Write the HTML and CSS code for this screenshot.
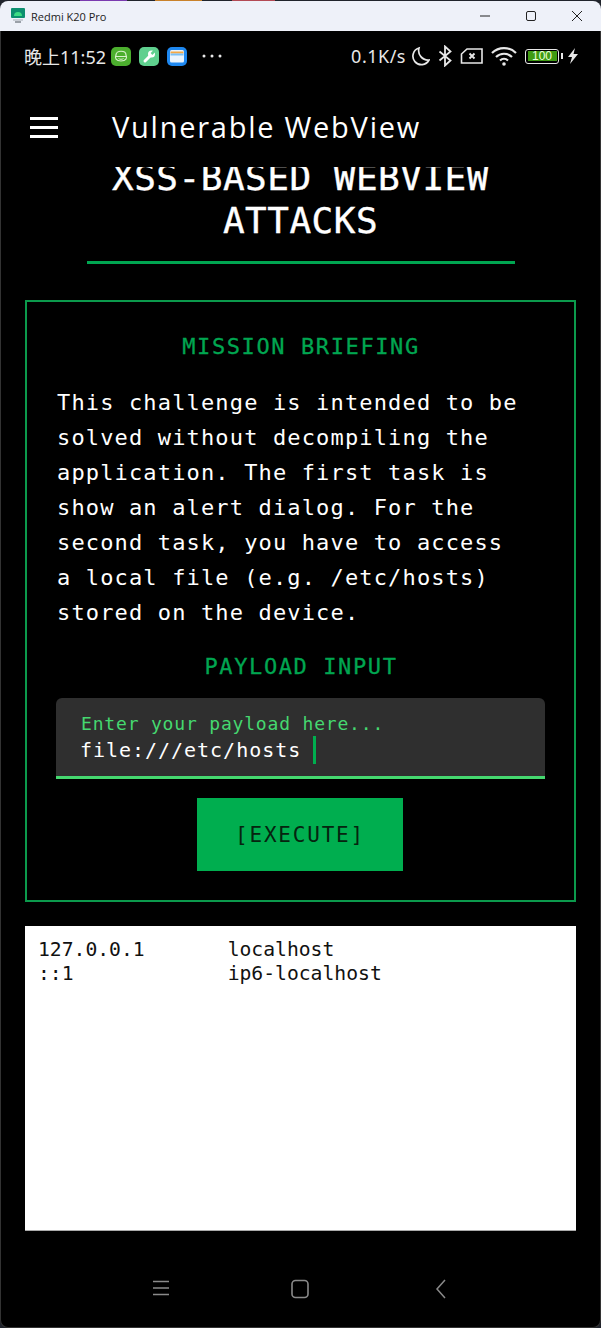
FILE: index.html
```html
<!DOCTYPE html>
<html lang="en">
<head>
    <meta charset="UTF-8">
    <meta name="viewport" content="width=device-width, initial-scale=1.0">
    <title>Vulnerable WebView</title>
    <link rel="stylesheet" href="styles.css">
</head>
<body>

<div class="window">
    <div class="title-bar">
        <svg class="emu-icon" width="16" height="16" viewBox="0 0 16 16">
            <rect x="1" y="0" width="14" height="10" rx="1" fill="#0d8f6f"/>
            <path d="M4 8a4 4 0 0 1 8 0z" fill="#3ddc84"/>
            <rect x="3" y="11" width="10" height="2" fill="#c9ced6"/>
            <rect x="5" y="13" width="6" height="2" fill="#9aa0a8"/>
        </svg>
        <span class="device-name">Redmi K20 Pro</span>
        <div class="window-controls">
            <svg width="14" height="14" viewBox="0 0 14 14"><path d="M2 7h10" stroke="#222" stroke-width="1" fill="none"/></svg>
            <svg width="14" height="14" viewBox="0 0 14 14"><rect x="2.5" y="2.5" width="9" height="9" rx="1.5" stroke="#222" stroke-width="1" fill="none"/></svg>
            <svg width="14" height="14" viewBox="0 0 14 14"><path d="M2 2l10 10M12 2L2 12" stroke="#222" stroke-width="1" fill="none"/></svg>
        </div>
    </div>

    <div class="phone">
        <div class="status-bar">
            <span class="clock">晚上11:52</span>
            <div class="notif-icons">
                <svg width="20" height="19" viewBox="0 0 20 19"><rect width="20" height="19" rx="5" fill="#4caf2e"/><path d="M5 8c0-5 10-5 10 0 1.500 3 0 6-5 6s-6.500-3-5-6z" fill="none" stroke="#d9f2cf" stroke-width="1.200"/><path d="M5 9.500h10M7.500 11.500c1.500 1 3.500 1 5 0" stroke="#d9f2cf" stroke-width="1" fill="none"/></svg>
                <svg width="20" height="19" viewBox="0 0 20 19"><rect width="20" height="19" rx="5" fill="#5fd08e"/><path d="M6 14l6-6" stroke="#fff" stroke-width="3" stroke-linecap="round"/><circle cx="12.500" cy="7" r="3.500" fill="#fff"/><path d="M12.500 7l4-4" stroke="#5fd08e" stroke-width="2.500"/></svg>
                <svg width="20" height="19" viewBox="0 0 20 19"><rect width="20" height="19" rx="5" fill="#1e88f0"/><rect x="3" y="3" width="14" height="12.500" rx="1.500" fill="#eaf4fd"/><rect x="3.500" y="4.500" width="13" height="2" fill="#f5a742"/><rect x="3.500" y="6.500" width="13" height="2" fill="#7cc0f5"/></svg>
            </div>
            <svg class="more-dots" width="20" height="4" viewBox="0 0 20 4"><circle cx="2" cy="2" r="1.500" fill="#e8e8e8"/><circle cx="10" cy="2" r="1.500" fill="#e8e8e8"/><circle cx="18" cy="2" r="1.500" fill="#e8e8e8"/></svg>
            <div class="status-right">
                <span class="net-speed">0.1K/s</span>
                <svg width="19" height="20" viewBox="0 0 19 20"><path d="M8 2a8.500 8.500 0 1 0 10 12A9.500 9.500 0 0 1 8 2z" fill="none" stroke="#e8e8e8" stroke-width="1.700"/></svg>
                <svg width="14" height="22" viewBox="0 0 14 22"><path d="M1.500 6.500l11 9L7 20.500V1.500l5.500 5-11 9" fill="none" stroke="#e8e8e8" stroke-width="1.800"/></svg>
                <svg width="23" height="18" viewBox="0 0 23 18"><path d="M7 2h15v14H1.500V7z" fill="none" stroke="#e8e8e8" stroke-width="1.600"/><path d="M9.500 6.500l5 5M14.500 6.500l-5 5" stroke="#e8e8e8" stroke-width="1.900"/></svg>
                <svg width="26" height="20" viewBox="0 0 26 20"><path d="M1 7a17 17 0 0 1 24 0M5 11a11.500 11.500 0 0 1 16 0M9 14.500a6 6 0 0 1 8 0" fill="none" stroke="#e8e8e8" stroke-width="2.200"/><circle cx="13" cy="18" r="1.800" fill="#e8e8e8"/></svg>
                <div class="battery"><span class="battery-level">100</span></div>
                <svg class="charge-bolt" width="10" height="16" viewBox="0 0 10 16"><path d="M7 0L0 9h4l-2 7 8-10H5.500z" fill="#e8e8e8"/></svg>
            </div>
        </div>

        <div class="app-bar">
            <div class="hamburger"><span></span><span></span><span></span></div>
            <span class="app-title">Vulnerable WebView</span>
        </div>

        <div class="scroll-area">
            <h1 class="page-title">XSS-BASED WEBVIEW ATTACKS</h1>
            <div class="title-rule"></div>

            <div class="mission-card">
                <h2 class="section-label">MISSION BRIEFING</h2>
                <p class="briefing">This challenge is intended to be solved without decompiling the application. The first task is show an alert dialog. For the second task, you have to access a local file (e.g. /etc/hosts) stored on the device.</p>
                <h2 class="section-label payload-label">PAYLOAD INPUT</h2>
                <div class="payload-field">
                    <div class="field-hint">Enter your payload here...</div>
                    <div class="field-value">file:///etc/hosts<span class="caret"></span></div>
                </div>
                <button class="execute-button">[EXECUTE]</button>
            </div>

            <pre class="result-view">127.0.0.1       localhost
::1             ip6-localhost</pre>
        </div>

        <div class="nav-bar">
            <svg width="18" height="18" viewBox="0 0 18 18"><path d="M1 2.500h16M1 9h16M1 15.500h16" stroke="#8a8a8a" stroke-width="1.500" fill="none"/></svg>
            <svg width="18" height="20" viewBox="0 0 18 20"><rect x="1" y="1.500" width="16" height="17" rx="3.500" stroke="#8a8a8a" stroke-width="1.600" fill="none"/></svg>
            <svg class="nav-back" width="12" height="20" viewBox="0 0 12 20"><path d="M10 1L2 10l8 9" stroke="#8a8a8a" stroke-width="1.500" fill="none"/></svg>
        </div>
    </div>
</div>

</body>
</html>
```

FILE: styles.css
```css
* {
    box-sizing: border-box;
}

body {
    margin: 0;
    height: 1328px;
    overflow: hidden;
    font-family: "DejaVu Sans Mono", monospace;
    background: linear-gradient(90deg, #20242c 0 80px, #7a3bb0 80px 127px, #20242c 127px 155px, #c9822b 155px 202px, #20242c 202px 232px, #b34a55 232px 275px, #20242c 275px);
}

.window {
    height: 1328px;
    padding-top: 1px;
    display: flex;
    flex-direction: column;
}

.title-bar {
    height: 30px;
    display: flex;
    align-items: center;
    padding-left: 10px;
    background-color: #eef1f9;
    border-radius: 8px 8px 0 0;
    flex-shrink: 0;
}

.device-name {
    margin-left: 5px;
    font-family: "Open Sans", sans-serif;
    font-size: 11px;
    color: #1c1c1c;
}

.window-controls {
    margin-left: auto;
    display: flex;
    gap: 32px;
    padding-right: 17px;
}

.phone {
    flex: 1;
    display: flex;
    flex-direction: column;
    background-color: #000;
    border-left: 1px solid #333;
    border-right: 1px solid #333;
    border-bottom: 1px solid #333;
    border-radius: 0 0 8px 8px;
    min-height: 0;
}

.status-bar {
    height: 50px;
    display: flex;
    align-items: center;
    padding: 0 22px 0 23px;
    color: #e8e8e8;
    flex-shrink: 0;
}

.clock {
    font-family: "Noto Sans", "Noto Sans CJK SC", sans-serif;
    font-size: 18px;
}

.notif-icons {
    display: flex;
    gap: 8px;
    margin-left: 5px;
}

.more-dots {
    margin-left: 15px;
}

.status-right {
    margin-left: auto;
    display: flex;
    align-items: center;
    gap: 8px;
}

.net-speed {
    margin-right: -3px;
    font-family: "Noto Sans", sans-serif;
    font-size: 18px;
    letter-spacing: 0.5px;
}

.battery {
    position: relative;
    width: 34px;
    height: 15px;
    margin-right: 3px;
    border: 1.5px solid #e8e8e8;
    border-radius: 3px;
    padding: 1.5px;
    display: flex;
}

/* battery nub */
.battery::after {
    content: "";
    position: absolute;
    right: -5px;
    top: 3px;
    width: 2px;
    height: 6px;
    background-color: #e8e8e8;
}

.battery-level {
    flex: 1;
    background-color: #3f9b12;
    font-family: "Liberation Sans", sans-serif;
    font-size: 12px;
    line-height: 10px;
    text-align: center;
    color: #eaffd8;
}

.charge-bolt {
    margin-left: -2px;
}

.app-bar {
    height: 86px;
    display: flex;
    align-items: center;
    flex-shrink: 0;
    padding: 6px 0 0 29px;
}

.hamburger {
    width: 28px;
    display: flex;
    flex-direction: column;
    gap: 6px;
}

.hamburger span {
    height: 3px;
    background-color: #fff;
}

.app-title {
    margin: -2px 0 0 54px;
    font-family: "Open Sans", sans-serif;
    font-size: 29px;
    letter-spacing: 1.75px;
    color: #fff;
}

.scroll-area {
    flex: 1;
    overflow: hidden;
    min-height: 0;
    padding: 0 24px;
}

.page-title {
    margin: -11px 0 0;
    padding: 0 60px;
    font-size: 36px;
    font-weight: 400;
    line-height: 43px;
    letter-spacing: 0.5px;
    text-align: center;
    color: #fff;
    -webkit-text-stroke: 0.4px #fff;
}

.title-rule {
    width: 428px;
    height: 3px;
    margin: 19px auto 36px;
    background-color: #00a651;
}

.mission-card {
    height: 602px;
    padding: 30px 29px 0;
    border: 2px solid #0b9a4c;
    display: flex;
    flex-direction: column;
    align-items: center;
}

.section-label {
    margin: 0;
    padding-left: 1px;
    font-size: 22px;
    font-weight: 400;
    line-height: 30px;
    letter-spacing: 1.6px;
    text-align: center;
    color: #00a651;
    -webkit-text-stroke: 0.3px #00a651;
}

.briefing {
    margin: 23px 0 0;
    width: 100%;
    padding: 0 16px 0 1px;
    font-size: 22px;
    line-height: 35px;
    letter-spacing: 1.15px;
    color: #fff;
}

.payload-label {
    margin-top: 22px;
}

.payload-field {
    width: 100%;
    height: 81px;
    margin-top: 16px;
    padding: 14px 24px 0;
    background-color: #2f2f2f;
    border-bottom: 3px solid #45d86f;
    border-radius: 6px 6px 0 0;
}

.field-hint {
    margin-left: 1px;
    font-size: 18px;
    line-height: 24px;
    letter-spacing: 0.82px;
    color: #45d86f;
}

.field-value {
    display: flex;
    align-items: center;
    font-size: 20px;
    line-height: 28px;
    letter-spacing: 0.97px;
    color: #fff;
}

.caret {
    width: 3px;
    height: 28px;
    margin-left: 12px;
    background-color: #00ae4f;
}

.execute-button {
    width: 206px;
    height: 73px;
    margin: 19px 1px 0 0;
    border: none;
    background-color: #00ae4f;
    font-family: "DejaVu Sans Mono", monospace;
    font-size: 21px;
    letter-spacing: 1.8px;
    color: #06240f;
}

.result-view {
    height: 305px;
    margin: 24px 0 0;
    padding: 12px 13px;
    background-color: #fff;
    border-bottom: 1px solid #aaa;
    font-family: "DejaVu Sans Mono", monospace;
    font-size: 19.700px;
    line-height: 24px;
    color: #111;
}

.nav-bar {
    height: 96px;
    display: flex;
    align-items: flex-start;
    flex-shrink: 0;
    padding-top: 48px;
    padding-left: 151px;
    gap: 121px;
}

.nav-back {
    margin-left: 5px;
}
```
